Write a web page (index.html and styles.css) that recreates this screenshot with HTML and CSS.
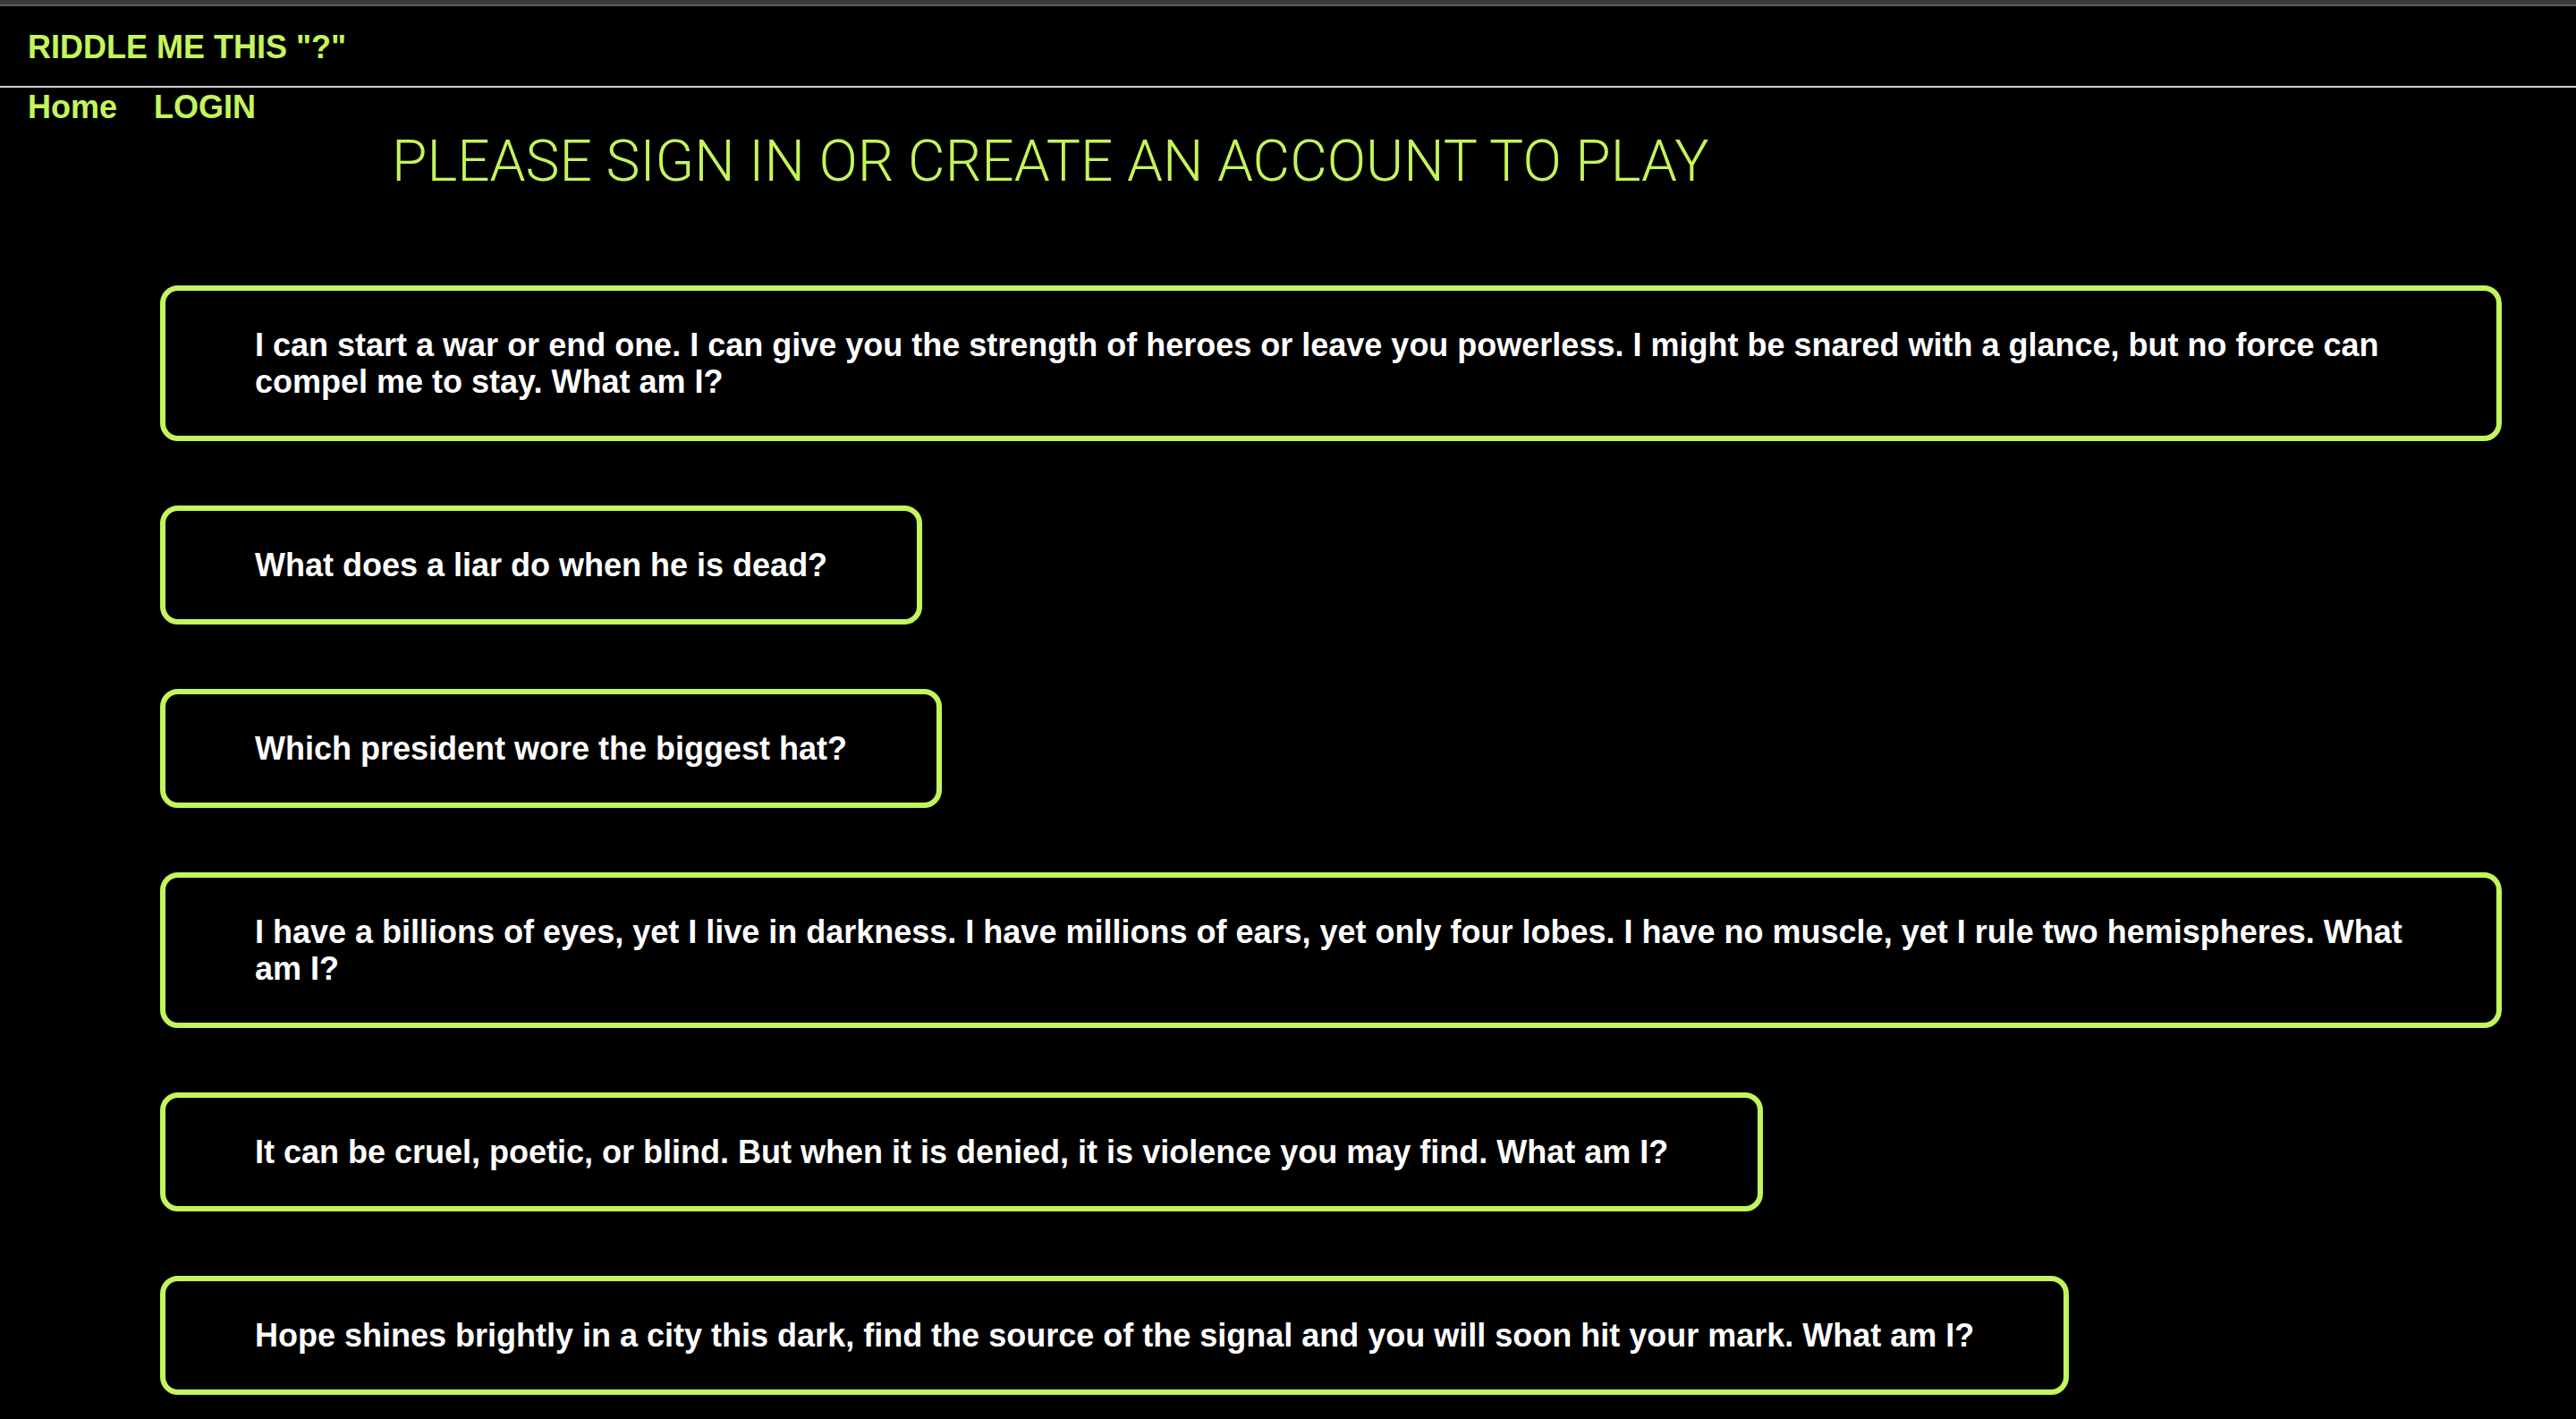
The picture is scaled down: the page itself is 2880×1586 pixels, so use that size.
FILE: index.html
```html
<!DOCTYPE html>
<html lang="en">
<head>
<meta charset="utf-8">
<title>Riddle Me This</title>
<link rel="stylesheet" href="styles.css">
</head>
<body>
<div class="chrome"></div>
<header class="topbar"><span class="brand">RIDDLE ME THIS "?"</span></header>
<nav class="nav"><a href="#">Home</a><a href="#">LOGIN</a></nav>
<main>
<h1 class="prompt">PLEASE SIGN IN OR CREATE AN ACCOUNT TO PLAY</h1>
<ul class="riddles">
<li class="riddle">I can start a war or end one. I can give you the strength of heroes or leave you powerless. I might be snared with a glance, but no force can compel me to stay. What am I?</li>
<li class="riddle">What does a liar do when he is dead?</li>
<li class="riddle">Which president wore the biggest hat?</li>
<li class="riddle">I have a billions of eyes, yet I live in darkness. I have millions of ears, yet only four lobes. I have no muscle, yet I rule two hemispheres. What am I?</li>
<li class="riddle">It can be cruel, poetic, or blind. But when it is denied, it is violence you may find. What am I?</li>
<li class="riddle">Hope shines brightly in a city this dark, find the source of the signal and you will soon hit your mark. What am I?</li>
</ul>
</main>
</body>
</html>
```
FILE: styles.css
```css
body {
  margin: 0;
  background: #000;
  font-family: "Liberation Sans", Arial, sans-serif;
}

.chrome {
  height: 5px;
  background: #3a3a3e;
  border-bottom: 2px solid #5e5e62;
}

.topbar {
  padding: 25px 31px 22px;
  border-bottom: 2px solid #d0d0d0;
}

.brand {
  font-size: 36px;
  font-weight: bold;
  color: #c3f55c;
}

.nav {
  display: flex;
  gap: 41px;
  padding: 1px 31px 0;
}

.nav a {
  font-size: 36px;
  font-weight: bold;
  color: #c3f55c;
  text-decoration: none;
}

.prompt {
  margin: 2px 0 0 438px;
  font-family: Roboto, "Liberation Sans", sans-serif;
  font-weight: 300;
  font-size: 64px;
  line-height: 75px;
  color: #c3f55c;
}

.riddles {
  list-style: none;
  margin: 101px 0 0 179px;
  padding: 0;
  width: 2618px;
  display: flex;
  flex-direction: column;
  align-items: flex-start;
  gap: 72px;
}

.riddle {
  border: 6px solid #c3f55c;
  border-radius: 20px;
  padding: 40px 100px;
  color: #fff;
  font-size: 36px;
  line-height: 41px;
  font-weight: bold;
}
```
